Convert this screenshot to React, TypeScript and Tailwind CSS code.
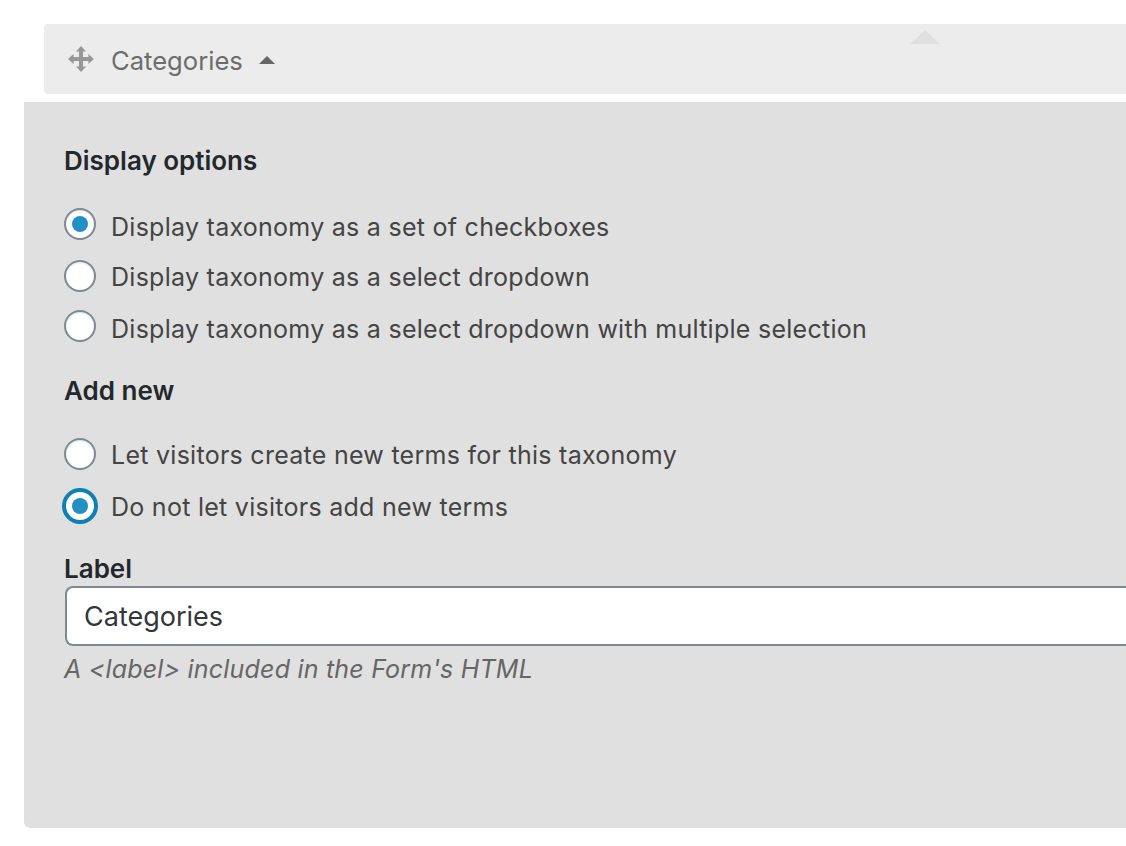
import React from "react";

const DragIcon = () => (
  <svg width="26" height="26" viewBox="0 0 26 26" className="text-[#979797]" fill="currentColor">
    <path d="M13 0 L18 5.6 L15 5.6 L15 11 L20.4 11 L20.4 8 L26 13 L20.4 18 L20.4 15 L15 15 L15 20.4 L18 20.4 L13 26 L8 20.4 L11 20.4 L11 15 L5.6 15 L5.6 18 L0 13 L5.6 8 L5.6 11 L11 11 L11 5.6 L8 5.6 Z" />
  </svg>
);

const Radio: React.FC<{ label: string; checked?: boolean; focused?: boolean; textClass?: string; className?: string }> = ({
  label,
  checked = false,
  focused = false,
  textClass = "",
  className = "",
}) => (
  <label className={`flex items-center h-[32px] ${className}`}>
    <span
      className={`rounded-full bg-white flex items-center justify-center shrink-0 ${
        focused
          ? "w-[36px] h-[36px] -mx-[2px] border-[4px] border-[#0f7fb8]"
          : "w-[32px] h-[32px] border-[2px] border-[#7e8993] shadow-[inset_0_1px_2px_rgba(0,0,0,0.12)]"
      }`}
    >
      {checked && <span className="w-[16px] h-[16px] rounded-full bg-[#2290c2]" />}
    </span>
    <span className={`ml-[15px] text-[25px] leading-[32px] text-[#444444] tracking-[0.27px] ${textClass}`}>{label}</span>
  </label>
);

export default function App() {
  return (
    <div className="w-[1126px] h-[846px] overflow-hidden bg-white pt-[24px] font-['Inter',sans-serif]">
      <div className="relative ml-[44px] h-[70px] bg-[#ececec] rounded-l-[4px] flex items-center pl-[24px]">
        <DragIcon />
        <span className="ml-[17px] mt-[4px] text-[25.6px] text-[#6c6c6c]">Categories</span>
        <span className="ml-[16px] mt-[2px] w-0 h-0 border-x-[8px] border-x-transparent border-b-[8px] border-b-[#666666]" />
        <span className="absolute left-[866px] top-[6px] w-0 h-0 border-x-[15px] border-x-transparent border-b-[14px] border-b-[#e0e0e0]" />
      </div>

      <div className="mt-[8px] ml-[24px] h-[726px] bg-[#e0e0e0] rounded-bl-[6px] pl-[40px] pt-[44px]">
        <h3 className="text-[26px] leading-[30px] font-semibold text-[#23282d]">Display options</h3>
        <div className="mt-[32px]">
          <Radio label="Display taxonomy as a set of checkboxes" checked textClass="mt-[5px]" />
          <Radio label="Display taxonomy as a select dropdown" className="mt-[20px]" textClass="mt-[2px]" />
          <Radio label="Display taxonomy as a select dropdown with multiple selection" className="mt-[18px]" textClass="mt-[5px]" />
        </div>
        <h3 className="mt-[34px] text-[26px] leading-[30px] font-semibold text-[#23282d]">Add new</h3>
        <div className="mt-[32px]">
          <Radio label="Let visitors create new terms for this taxonomy" textClass="mt-[2px]" />
          <Radio label="Do not let visitors add new terms" checked focused className="mt-[20px]" textClass="mt-[2px]" />
        </div>
        <div className="mt-[32px] text-[26px] leading-[30px] font-semibold text-[#23282d]">Label</div>
        <div className="mt-[2px] ml-[1px] h-[60px] bg-white border-y-2 border-l-2 border-[#7e8993] rounded-l-[8px] flex items-center pl-[17px] pt-[2px] text-[27px] text-[#32373c]">
          Categories
        </div>
        <p className="mt-[7px] text-[25px] leading-[32px] italic text-[#666666] tracking-[0.2px]">A &lt;label&gt; included in the Form's HTML</p>
      </div>
    </div>
  );
}
